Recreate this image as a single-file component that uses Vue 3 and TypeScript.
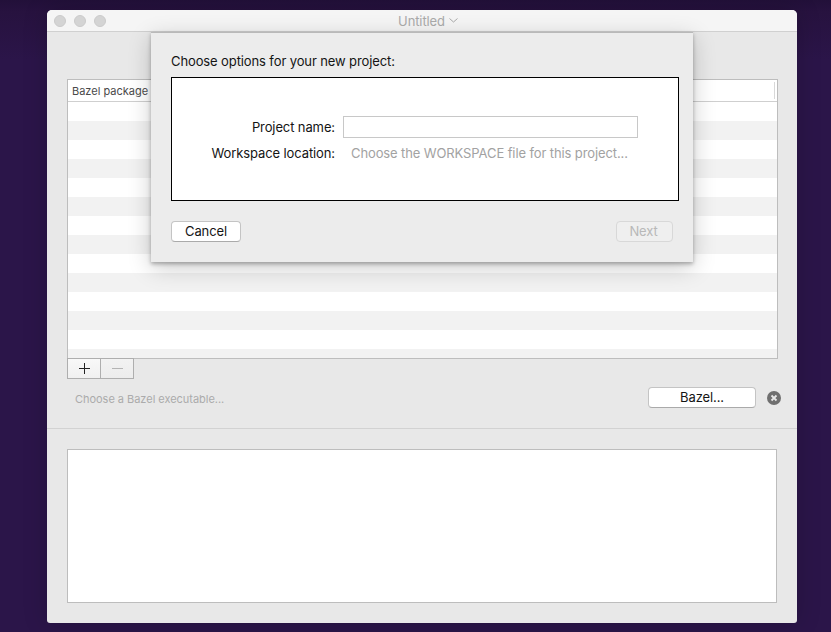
<script setup lang="ts">
// Bazel project window with the "new project" sheet dropped over it.
const rows: number[] = Array.from({ length: 14 }, (_, i) => i)
</script>

<template>
  <div class="desktop">
    <div class="window">
      <header class="titlebar">
        <div class="lights">
          <span class="light"></span>
          <span class="light"></span>
          <span class="light"></span>
        </div>
        <div class="doc-title">
          <span>Untitled</span>
          <svg class="chevron" viewBox="0 0 9 5" width="9" height="5">
            <path d="M.5.5 4.5 4 8.5.5" fill="none" stroke="#aaa" stroke-width="1" />
          </svg>
        </div>
      </header>

      <section class="upper">
        <div class="table">
          <div class="table-head">
            <span class="head-cell">Bazel package</span>
            <span class="head-sep"></span>
          </div>
          <div class="table-body">
            <div v-for="r in rows" :key="r" class="row" :class="{ odd: r % 2 === 1 }"></div>
          </div>
        </div>
        <div class="segments">
          <button class="seg">
            <svg viewBox="0 0 13 13" width="13" height="13">
              <path d="M6.5 1v11M1 6.5h11" stroke="#222" stroke-width="1" fill="none" />
            </svg>
          </button>
          <button class="seg seg-off">
            <svg viewBox="0 0 13 13" width="13" height="13">
              <path d="M1 6.5h11" stroke="#b4b4b4" stroke-width="1" fill="none" />
            </svg>
          </button>
        </div>
        <div class="exec-row">
          <span class="exec-path">Choose a Bazel executable...</span>
          <button class="btn bazel-btn">Bazel...</button>
          <svg class="clear" viewBox="0 0 14 14" width="14" height="14">
            <circle cx="7" cy="7" r="7" fill="#6f6f6f" />
            <path d="M4.5 4.5l5 5M9.5 4.5l-5 5" stroke="#e8e8e8" stroke-width="1.8" />
          </svg>
        </div>
      </section>

      <section class="lower">
        <div class="log"></div>
      </section>

      <div class="sheet">
        <p class="sheet-title">Choose options for your new project:</p>
        <div class="sheet-box">
          <div class="form">
            <label class="form-label">Project name:</label>
            <div class="input"></div>
            <label class="form-label">Workspace location:</label>
            <span class="placeholder">Choose the WORKSPACE file for this project...</span>
          </div>
        </div>
        <div class="sheet-actions">
          <button class="btn cancel-btn">Cancel</button>
          <button class="btn next-btn" disabled>Next</button>
        </div>
      </div>
    </div>
  </div>
</template>

<style scoped>
.desktop {
  width: 831px;
  height: 632px;
  overflow: hidden;
  padding: 10px 0 0 47px;
  box-sizing: border-box;
  background: linear-gradient(180deg, #221039 0, #27123f 12px, #2b1549 60px);
  font-family: Inter, "Liberation Sans", sans-serif;
  font-size: 13px;
  letter-spacing: -0.11px;
  color: #141414;
}
.window {
  position: relative;
  width: 750px;
  height: 613px;
  display: flex;
  flex-direction: column;
  background: #e8e8e8;
  border-radius: 5px 5px 3px 3px;
  box-shadow: 0 0 24px rgba(0, 0, 0, 0.18);
}
.titlebar {
  position: relative;
  height: 21px;
  flex: none;
  display: flex;
  align-items: center;
  justify-content: center;
  padding-left: 12px;
  background: #f5f5f5;
  border-bottom: 1px solid #d0d0d0;
  border-radius: 5px 5px 0 0;
}
.lights {
  position: absolute;
  left: 7px;
  top: 5px;
  display: flex;
  gap: 8px;
}
.light {
  width: 12px;
  height: 12px;
  box-sizing: border-box;
  border-radius: 50%;
  background: #d4d4d4;
  border: 1px solid #cbcbcb;
}
.doc-title {
  display: flex;
  align-items: center;
  gap: 4px;
  color: #aaa;
}
.chevron {
  margin-top: -1px;
}
.upper {
  height: 397px;
  flex: none;
  box-sizing: border-box;
  padding: 47px 19px 0 20px;
  border-bottom: 1px solid #d2d2d2;
}
.table {
  height: 280px;
  box-sizing: border-box;
  border: 1px solid #bdbdbd;
  background: #fff;
  display: flex;
  flex-direction: column;
  overflow: hidden;
}
.table-head {
  height: 21px;
  flex: none;
  display: flex;
  align-items: center;
  justify-content: space-between;
  padding: 0 2px 0 4px;
  border-bottom: 1px solid #cfcfcf;
}
.head-cell {
  font-size: 11px;
  letter-spacing: 0;
  color: #4a4a4a;
}
.head-sep {
  width: 1px;
  height: 17px;
  background: #d8d8d8;
}
.table-body {
  flex: 1;
  overflow: hidden;
}
.row {
  height: 19px;
  background: #fff;
}
.row.odd {
  background: #f2f2f2;
}
.segments {
  display: flex;
  width: 67px;
  height: 21px;
  box-sizing: border-box;
  margin-top: -1px;
  border: 1px solid #aeaeae;
}
.seg {
  flex: 1;
  padding: 0;
  border: 0;
  display: flex;
  align-items: center;
  justify-content: center;
  background: linear-gradient(180deg, #f8f8f8, #f0f0f0);
}
.seg + .seg {
  border-left: 1px solid #aeaeae;
}
.seg-off {
  background: linear-gradient(180deg, #f2f2f2, #ececec);
}
.exec-row {
  display: flex;
  align-items: center;
  height: 21px;
  margin-top: 8px;
  padding-left: 8px;
}
.exec-path {
  flex: 1;
  padding-top: 2px;
  font-size: 11px;
  letter-spacing: -0.03px;
  color: #ababab;
}
.clear {
  margin: 0 -3px 0 11px;
}
.btn {
  height: 21px;
  padding: 0 0 2px;
  box-sizing: border-box;
  font: inherit;
  letter-spacing: inherit;
  color: #141414;
  background: #fff;
  border: 1px solid #c4c4c4;
  border-bottom-color: #aaa;
  border-radius: 4px;
}
.bazel-btn {
  width: 108px;
}
.lower {
  flex: 1;
  padding: 20px;
  display: flex;
}
.log {
  flex: 1;
  box-sizing: border-box;
  background: #fff;
  border: 1px solid #bdbdbd;
}
.sheet {
  position: absolute;
  left: 104px;
  top: 22px;
  width: 542px;
  height: 230px;
  box-sizing: border-box;
  padding: 20px 20px 0 20px;
  display: flex;
  flex-direction: column;
  background: #ececec;
  border-top: 1px solid #b9b9b9;
  box-shadow: 0 2px 4px rgba(0, 0, 0, 0.3), 0 6px 22px rgba(0, 0, 0, 0.2);
}
.sheet-title {
  margin: 0;
  height: 16px;
  line-height: 16px;
}
.sheet-box {
  height: 124px;
  box-sizing: border-box;
  margin: 8px -6px 0 0;
  border: 1px solid #000;
  background: #fff;
  padding-top: 38px;
}
.form {
  display: grid;
  grid-template-columns: 163px 295px;
  column-gap: 8px;
  row-gap: 7px;
  align-items: center;
}
.form-label {
  text-align: right;
}
.input {
  height: 22px;
  box-sizing: border-box;
  border: 1px solid #c8c8c8;
  background: #fff;
}
.placeholder {
  padding-left: 8px;
  white-space: nowrap;
  color: #a2a2a2;
}
.sheet-actions {
  display: flex;
  justify-content: space-between;
  margin-top: 20px;
}
.cancel-btn {
  width: 70px;
}
.next-btn {
  width: 57px;
  padding-right: 2px;
  color: #b8b8b8;
  background: #efefef;
  border-color: #d8d8d8;
}
</style>
